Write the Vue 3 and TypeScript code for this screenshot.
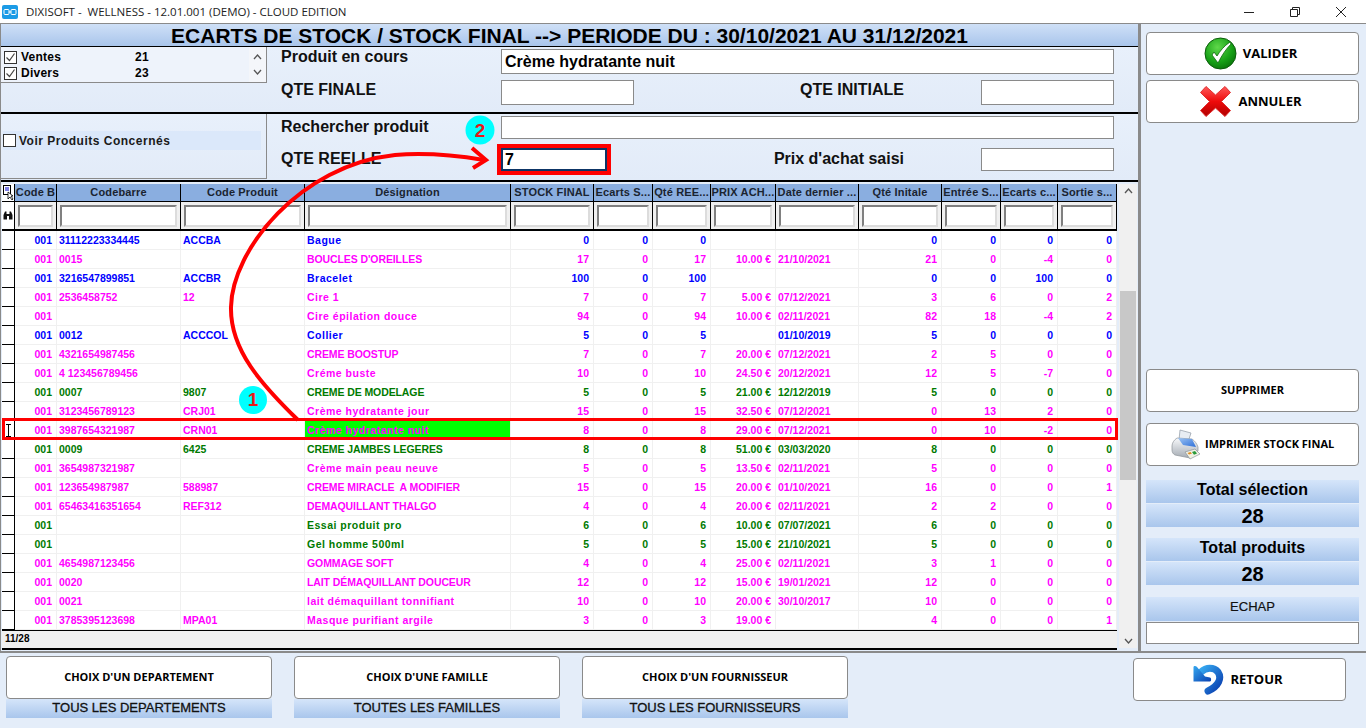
<template>
  <div class="app">
    <header class="titlebar">
      <svg class="app-icon" width="16" height="14" viewBox="0 0 16 14">
        <rect width="16" height="14" rx="2" fill="#1c9be6" />
        <rect x="2" y="4.5" width="5" height="5" rx="1" fill="none" stroke="#fff" />
        <rect x="9" y="4.5" width="5" height="5" rx="1" fill="none" stroke="#fff" />
        <path d="M7 7h2" stroke="#fff" />
      </svg>
      <span class="app-title">{{ appTitle }}</span>
      <div class="win-controls">
        <svg width="12" height="12" viewBox="0 0 12 12"><path d="M1 6.5h10" stroke="#222" /></svg>
        <svg width="12" height="12" viewBox="0 0 12 12" fill="none" stroke="#222"><path d="M1.5 3.5h7v7h-7zM3.5 3.5v-2h7v7h-2" /></svg>
        <svg width="12" height="12" viewBox="0 0 12 12"><path d="M1 1l10 10M11 1L1 11" stroke="#222" /></svg>
      </div>
    </header>

    <div class="main">
      <section class="left">
        <h1 class="page-title">ECARTS DE STOCK / STOCK FINAL --&gt; PERIODE DU : 30/10/2021 AU 31/12/2021</h1>

        <div class="form-section first">
          <div class="side">
            <div class="listbox">
              <div class="list-rows">
                <label v-for="item in origins" :key="item.name" class="list-row">
                  <span class="check on">
                    <svg width="11" height="11" viewBox="0 0 11 11"><path d="M1.5 5.5l3 3 5-7" fill="none" stroke="#444" stroke-width="1.2" /></svg>
                  </span>
                  <span class="list-name">{{ item.name }}</span>
                  <span class="list-count">{{ item.count }}</span>
                </label>
              </div>
              <div class="list-scroll">
                <svg width="9" height="6" viewBox="0 0 9 6"><path d="M1 5l3.5-4L8 5" fill="none" stroke="#555" stroke-width="1.3" /></svg>
                <svg width="9" height="6" viewBox="0 0 9 6"><path d="M1 1l3.5 4L8 1" fill="none" stroke="#555" stroke-width="1.3" /></svg>
              </div>
            </div>
          </div>
          <div class="fields">
            <span class="field-label top-label">Produit en cours</span>
            <input class="field wide product" value="Crème hydratante nuit" readonly />
            <span class="field-label">QTE FINALE</span>
            <input class="field" readonly />
            <span class="field-label right-label">QTE INITIALE</span>
            <input class="field" readonly />
          </div>
        </div>

        <div class="form-section second">
          <div class="side boxed">
            <label class="concerned">
              <span class="check"></span>
              <span>Voir Produits Concernés</span>
            </label>
          </div>
          <div class="fields">
            <span class="field-label">Rechercher produit</span>
            <input class="field wide" readonly />
            <span class="field-label">QTE REELLE</span>
            <input class="field qty" value="7" readonly />
            <span class="field-label right-label">Prix d'achat saisi</span>
            <input class="field" readonly />
          </div>
        </div>

        <div class="grid-wrap">
          <div class="grid">
            <div class="grid-row head">
              <div class="corner">
                <svg width="11" height="15" viewBox="0 0 11 15">
                  <rect x="0.5" y="0.5" width="7" height="9" fill="#fff" stroke="#000" />
                  <path d="M2 3h4M2 5h4" stroke="#00c" />
                  <path d="M5 7l0 7 2-2 2 3 1-1-2-3h2z" fill="#fff" stroke="#000" stroke-width="0.8" />
                </svg>
              </div>
              <div v-for="col in columns" :key="col" class="head-cell">{{ col }}</div>
            </div>
            <div class="grid-row filters">
              <div class="corner">
                <svg width="10" height="9" viewBox="0 0 10 9">
                  <path d="M0.5 4L2 0.5h1.5V3h3V0.5H8L9.5 4v4.5h-3.5V5H4v3.5H0.5z" fill="#111" />
                </svg>
              </div>
              <div v-for="col in columns" :key="col" class="filter-cell"><input class="filter" readonly /></div>
            </div>
            <div
              v-for="(row, i) in rows"
              :key="i"
              class="grid-row data"
              :class="row.kind"
            >
              <div class="marker">
                <svg v-if="i === selected" width="7" height="13" viewBox="0 0 7 13"><path d="M1 .5h5M1 12.5h5M3.5 .5v12" stroke="#000" /></svg>
              </div>
              <div class="cell num">001</div>
              <div class="cell">{{ row.bar }}</div>
              <div class="cell">{{ row.code }}</div>
              <div class="cell name" :class="{ picked: i === selected, lower: hasLowercase(row.name) }">{{ row.name }}</div>
              <div class="cell num">{{ row.v[0] }}</div>
              <div class="cell num">0</div>
              <div class="cell num">{{ row.v[0] }}</div>
              <div class="cell num">{{ row.price }}</div>
              <div class="cell">{{ row.date }}</div>
              <div class="cell num">{{ row.v[1] }}</div>
              <div class="cell num">{{ row.v[2] }}</div>
              <div class="cell num">{{ row.v[3] }}</div>
              <div class="cell num">{{ row.v[4] }}</div>
            </div>
            <div class="grid-foot">11/28</div>
          </div>
          <div class="scrollbar">
            <svg width="9" height="6" viewBox="0 0 9 6"><path d="M1 5l3.5-4L8 5" fill="none" stroke="#555" stroke-width="1.3" /></svg>
            <div class="track"><div class="thumb"></div></div>
            <svg width="9" height="6" viewBox="0 0 9 6"><path d="M1 1l3.5 4L8 1" fill="none" stroke="#555" stroke-width="1.3" /></svg>
          </div>
        </div>
      </section>

      <aside class="right">
        <button class="btn big">
          <svg width="33" height="33" viewBox="0 0 33 33">
            <defs>
              <radialGradient id="okFill" cx="0.4" cy="0.3" r="0.8">
                <stop offset="0" stop-color="#5fd84a" />
                <stop offset="0.6" stop-color="#16a016" />
                <stop offset="1" stop-color="#066a06" />
              </radialGradient>
            </defs>
            <circle cx="16.5" cy="16.5" r="15.5" fill="url(#okFill)" stroke="#0a5c0a" />
            <path d="M8 18l6 8c4-8 8-14 13-19l-1-2c-6 4-10 9-13 14l-3-4z" fill="#fff" stroke="#0c6a0c" stroke-width="0.8" />
          </svg>
          <span class="btn-big-text">VALIDER</span>
        </button>
        <button class="btn big">
          <svg width="33" height="33" viewBox="0 0 33 33">
            <defs>
              <linearGradient id="koFill" x1="0" y1="0" x2="0" y2="1">
                <stop offset="0" stop-color="#ff5a5a" />
                <stop offset="0.5" stop-color="#ee0a0a" />
                <stop offset="1" stop-color="#b00000" />
              </linearGradient>
            </defs>
            <path d="M7 1.5l9.5 8.5 9.5-8.5 5.5 6-9 9 9 9-5.5 6-9.5-8.5-9.5 8.5-5.5-6 9-9-9-9z" fill="url(#koFill)" stroke="#e03030" stroke-linejoin="round" />
          </svg>
          <span class="btn-big-text">ANNULER</span>
        </button>
        <button class="btn delete"><span class="lift">SUPPRIMER</span></button>
        <button class="btn print">
          <svg width="30" height="32" viewBox="0 0 30 32">
            <defs>
              <linearGradient id="printBody" x1="0" y1="0" x2="0" y2="1">
                <stop offset="0" stop-color="#f8f9fb" />
                <stop offset="1" stop-color="#a4abb3" />
              </linearGradient>
              <linearGradient id="printGlass" x1="0" y1="0" x2="1" y2="1">
                <stop offset="0" stop-color="#9cc4f4" />
                <stop offset="1" stop-color="#2f6fd8" />
              </linearGradient>
            </defs>
            <path d="M9 1l11 3-3 9-9-2z" fill="#e8edf3" stroke="#8e98a4" stroke-width="0.7" />
            <path d="M1 17c0-3 2-6 5-8l15 1c3 2 5 5 6 8v4l-8 7-15-3c-2-1-3-3-3-5z" fill="url(#printBody)" stroke="#8e949a" stroke-width="0.7" />
            <path d="M7 9l14 1 4 8-13-2z" fill="url(#printGlass)" />
            <path d="M14 23l10-3 5 5-10 5z" fill="#f0f2e4" stroke="#7d8790" stroke-width="0.6" />
            <path d="M21 23l3-1 2 2.500-3 1.200z" fill="#2a9a3a" />
            <path d="M16.500 24l3-1 1.500 1.500-3 1z" fill="#e08a20" />
          </svg>
          <span class="lift">IMPRIMER STOCK FINAL</span>
        </button>
        <div class="band total first-total">Total sélection</div>
        <div class="band total value">28</div>
        <div class="band total second-total">Total produits</div>
        <div class="band total value">28</div>
        <div class="band echap">ECHAP</div>
        <input class="echap-input" readonly />
      </aside>
    </div>

    <footer class="bottom">
      <div v-for="group in choices" :key="group.action" class="choice">
        <button class="btn choice-btn"><span class="lift">{{ group.action }}</span></button>
        <div class="band choice-label">{{ group.current }}</div>
      </div>
      <button class="btn big back">
        <svg width="32" height="31" viewBox="0 0 32 31">
          <defs>
            <linearGradient id="backFill" x1="0" y1="0" x2="1" y2="1">
              <stop offset="0" stop-color="#35a8f0" />
              <stop offset="1" stop-color="#0a3fb0" />
            </linearGradient>
          </defs>
          <path d="M16 27C27 22 30 14 26 8 22 3 14 3 9 8" fill="none" stroke="url(#backFill)" stroke-width="7" stroke-linecap="round" />
          <path d="M1.500 3L1.500 17.500 18 17.500C19.500 17.500 19.500 13.500 18 13.500L13 12.500 5 3C4 1.500 1.500 1.500 1.500 3z" fill="url(#backFill)" />
        </svg>
        <span class="btn-big-text">RETOUR</span>
      </button>
    </footer>

    <!-- annotations posées sur la capture -->
    <svg class="annotations" width="1366" height="728" viewBox="0 0 1366 728">
      <rect x="3.500" y="419.500" width="1113" height="19" fill="none" stroke="#f00" stroke-width="3" />
      <path d="M298 420C262 385 230 350 231 307 232 250 300 165 395 155 430 152 460 156 484 160" fill="none" stroke="#f00" stroke-width="4" />
      <path d="M472 148L486 160 473 168" fill="none" stroke="#f00" stroke-width="4" />
      <circle cx="253" cy="400" r="14" fill="#0ff" />
      <text x="253" y="406" class="badge">1</text>
      <circle cx="480" cy="130" r="14.500" fill="#0ff" />
      <text x="480" y="137" class="badge">2</text>
    </svg>
  </div>
</template>

<script setup lang="ts">
type Kind = 'blue' | 'pink' | 'green'

interface StockRow {
  kind: Kind
  bar: string
  code: string
  name: string
  price: string
  date: string
  // stock final, qté initiale, entrée, écarts, sortie
  v: [number, number, number, number, number]
}

const appTitle = 'DIXISOFT -  WELLNESS - 12.01.001 (DEMO) - CLOUD EDITION'

const selected = 10

const origins = [
  { name: 'Ventes', count: 21 },
  { name: 'Divers', count: 23 },
]

const columns = [
  'Code B', 'Codebarre', 'Code Produit', 'Désignation', 'STOCK FINAL', 'Ecarts S...', 'Qté REE...',
  'PRIX ACH...', 'Date dernier ...', 'Qté Initale', 'Entrée S...', 'Ecarts c...', 'Sortie s...',
]

const rows: StockRow[] = [
  { kind: 'blue', bar: '31112223334445', code: 'ACCBA', name: 'Bague', price: '', date: '', v: [0, 0, 0, 0, 0] },
  { kind: 'pink', bar: '0015', code: '', name: "BOUCLES D'OREILLES", price: '10.00 €', date: '21/10/2021', v: [17, 21, 0, -4, 0] },
  { kind: 'blue', bar: '3216547899851', code: 'ACCBR', name: 'Bracelet', price: '', date: '', v: [100, 0, 0, 100, 0] },
  { kind: 'pink', bar: '2536458752', code: '12', name: 'Cire 1', price: '5.00 €', date: '07/12/2021', v: [7, 3, 6, 0, 2] },
  { kind: 'pink', bar: '', code: '', name: 'Cire épilation douce', price: '10.00 €', date: '02/11/2021', v: [94, 82, 18, -4, 2] },
  { kind: 'blue', bar: '0012', code: 'ACCCOL', name: 'Collier', price: '', date: '01/10/2019', v: [5, 5, 0, 0, 0] },
  { kind: 'pink', bar: '4321654987456', code: '', name: 'CREME BOOSTUP', price: '20.00 €', date: '07/12/2021', v: [7, 2, 5, 0, 0] },
  { kind: 'pink', bar: '4 123456789456', code: '', name: 'Créme buste', price: '24.50 €', date: '20/12/2021', v: [10, 12, 5, -7, 0] },
  { kind: 'green', bar: '0007', code: '9807', name: 'CREME DE MODELAGE', price: '21.00 €', date: '12/12/2019', v: [5, 5, 0, 0, 0] },
  { kind: 'pink', bar: '3123456789123', code: 'CRJ01', name: 'Crème hydratante jour', price: '32.50 €', date: '07/12/2021', v: [15, 0, 13, 2, 0] },
  { kind: 'pink', bar: '3987654321987', code: 'CRN01', name: 'Crème hydratante nuit', price: '29.00 €', date: '07/12/2021', v: [8, 0, 10, -2, 0] },
  { kind: 'green', bar: '0009', code: '6425', name: 'CREME JAMBES LEGERES', price: '51.00 €', date: '03/03/2020', v: [8, 8, 0, 0, 0] },
  { kind: 'pink', bar: '3654987321987', code: '', name: 'Crème main peau neuve', price: '13.50 €', date: '02/11/2021', v: [5, 5, 0, 0, 0] },
  { kind: 'pink', bar: '123654987987', code: '588987', name: 'CREME MIRACLE  A MODIFIER', price: '20.00 €', date: '01/10/2021', v: [15, 16, 0, 0, 1] },
  { kind: 'pink', bar: '65463416351654', code: 'REF312', name: 'DEMAQUILLANT THALGO', price: '20.00 €', date: '02/11/2021', v: [4, 2, 2, 0, 0] },
  { kind: 'green', bar: '', code: '', name: 'Essai produit pro', price: '10.00 €', date: '07/07/2021', v: [6, 6, 0, 0, 0] },
  { kind: 'green', bar: '', code: '', name: 'Gel homme 500ml', price: '15.00 €', date: '21/10/2021', v: [5, 5, 0, 0, 0] },
  { kind: 'pink', bar: '4654987123456', code: '', name: 'GOMMAGE SOFT', price: '25.00 €', date: '02/11/2021', v: [4, 3, 1, 0, 0] },
  { kind: 'pink', bar: '0020', code: '', name: 'LAIT DÉMAQUILLANT DOUCEUR', price: '15.00 €', date: '19/01/2021', v: [12, 12, 0, 0, 0] },
  { kind: 'pink', bar: '0021', code: '', name: 'lait démaquillant tonnifiant', price: '20.00 €', date: '30/10/2017', v: [10, 10, 0, 0, 0] },
  { kind: 'pink', bar: '3785395123698', code: 'MPA01', name: 'Masque purifiant argile', price: '19.00 €', date: '', v: [3, 4, 0, 0, 1] },
]

const choices = [
  { action: "CHOIX D'UN DEPARTEMENT", current: 'TOUS LES DEPARTEMENTS' },
  { action: "CHOIX D'UNE FAMILLE", current: 'TOUTES LES FAMILLES' },
  { action: "CHOIX D'UN FOURNISSEUR", current: 'TOUS LES FOURNISSEURS' },
]

const hasLowercase = (name: string): boolean => /[a-z]/.test(name)
</script>

<style>
html,
body {
  margin: 0;
  overflow: hidden;
}
</style>

<style scoped>
.app {
  position: relative;
  width: 1366px;
  height: 728px;
  overflow: hidden;
  background: #e4edf9;
  font-family: "Liberation Sans", Arial, sans-serif;
  color: #000;
}

.titlebar {
  height: 23px;
  display: flex;
  align-items: center;
  background: #fff;
  padding-left: 2px;
}

.app-icon {
  margin-right: 8px;
}

.app-title {
  font-family: "Open Sans", sans-serif;
  font-size: 11.5px;
  color: #222;
  white-space: pre;
}

.win-controls {
  margin-left: auto;
  display: flex;
  gap: 34px;
  padding-right: 19px;
}

.main {
  display: flex;
  height: 627px;
  border-top: 1px solid #8a8a8a;
  border-left: 1px solid #8a8a8a;
}

.left {
  width: 1138px;
  border-right: 3px solid #8a8a8a;
}

.page-title {
  margin: 0;
  height: 22px;
  line-height: 23px;
  text-align: center;
  font-size: 21px;
  font-weight: 700;
  background: linear-gradient(#cfe0f7, #a9c5eb);
  border-bottom: 1px solid #000;
  white-space: nowrap;
}

.form-section {
  display: flex;
  border-bottom: 2px solid #000;
  background: linear-gradient(#e8f0fb, #e2ebf8);
}

.form-section.first {
  height: 65px;
}

.form-section.second {
  height: 66px;
}

.side {
  width: 266px;
  flex: none;
}

.side.boxed {
  height: 65px;
  border-right: 1px solid #8a8a8a;
  border-bottom: 1px solid #8a8a8a;
  box-sizing: border-box;
  padding-top: 17px;
}

.listbox {
  height: 35px;
  display: flex;
  background: #eef3fb;
  border-right: 1px solid #8a8a8a;
  border-bottom: 1px solid #8a8a8a;
}

.list-rows {
  flex: 1;
  padding-top: 2px;
}

.list-row {
  display: flex;
  align-items: center;
  height: 16px;
  padding-left: 3px;
  font-size: 12px;
  font-weight: 700;
  letter-spacing: 0.25px;
}

.check {
  width: 11px;
  height: 11px;
  display: inline-flex;
  border: 1px solid #333;
  background: #fff;
  flex: none;
}

.list-name {
  width: 114px;
  margin-left: 4px;
}

.list-scroll {
  width: 17px;
  display: flex;
  flex-direction: column;
  align-items: center;
  justify-content: space-around;
  padding: 3px 0;
  background: #f4f6fa;
}

.concerned {
  display: flex;
  align-items: center;
  gap: 3px;
  height: 19px;
  margin: 0 5px 0 2px;
  background: #dbe8fa;
  font-size: 12px;
  font-weight: 700;
  letter-spacing: 0.5px;
  color: #1a1a1a;
}

.fields {
  flex: 1;
  display: grid;
  grid-template-columns: 220px 133px 347px 133px;
  grid-auto-rows: 25px;
  row-gap: 6px;
  padding: 2px 0 0 14px;
  align-items: center;
}

.second .fields {
  grid-auto-rows: 23px;
  row-gap: 9px;
  padding-top: 2px;
}

.field-label {
  font-size: 16px;
  font-weight: 700;
  color: #111;
  white-space: nowrap;
  margin-bottom: 5px;
}

.field-label.top-label {
  margin-bottom: 9px;
}

.second .field-label {
  margin-bottom: 1px;
}

.right-label {
  text-align: right;
  padding-right: 77px;
}

.field {
  box-sizing: border-box;
  height: 25px;
  width: 133px;
  border: 1px solid #8a8a8a;
  border-radius: 0;
  background: #fff;
  padding: 0 3px;
  font-family: "Liberation Sans", Arial, sans-serif;
  font-size: 16px;
  font-weight: 700;
  outline: none;
}

.second .field {
  height: 23px;
}

.field.wide {
  grid-column: 2 / -1;
  width: 613px;
}

.field.qty {
  width: 106px;
  border: 2px solid #0d3566;
  outline: 4px solid #f00;
  padding: 0 2px;
}

.grid-wrap {
  display: flex;
  margin-top: 2px;
  padding-left: 1px;
}

.grid {
  width: 1115px;
}

.grid-row {
  display: grid;
  grid-template-columns: 13px 42px 124px 124px 206px 83px 59px 58px 65px 83px 83px 59px 57px 59px;
}

.head {
  height: 17px;
  border-bottom: 1px solid #000;
}

.corner {
  background: #fff;
  border-right: 1px solid #000;
  display: flex;
  align-items: center;
  justify-content: center;
  overflow: hidden;
}

.head-cell {
  background: #8aaee0;
  border-right: 1px solid #000;
  font-size: 11px;
  font-weight: 700;
  letter-spacing: 0.15px;
  line-height: 17px;
  text-align: center;
  color: #1a2430;
  white-space: nowrap;
  overflow: hidden;
}

.filters {
  height: 27px;
  border-bottom: 2px solid #000;
  background: #f0f0f0;
}

.filter-cell {
  display: flex;
  align-items: center;
  justify-content: center;
  border-right: 1px solid #000;
  min-width: 0;
}

.filter {
  box-sizing: border-box;
  width: calc(100% - 6px);
  height: 22px;
  padding: 0;
  border: 2px solid;
  border-color: #808080 #dcdcdc #dcdcdc #808080;
  background: #fff;
  outline: none;
}

.data {
  height: 19px;
  background: #fff;
  font-size: 10.5px;
  font-weight: 700;
  line-height: 18px;
}

.data.blue {
  color: #0000ff;
}

.data.pink {
  color: #ff00ff;
}

.data.green {
  color: #007a00;
}

.marker {
  border-right: 1px solid #000;
  border-bottom: 1px solid #000;
  display: flex;
  align-items: center;
  justify-content: center;
}

.cell {
  box-sizing: border-box;
  padding: 0 2px;
  border-right: 1px solid #f0f0f0;
  border-bottom: 1px solid #f0f0f0;
  white-space: pre;
  overflow: hidden;
}

.cell.num {
  text-align: right;
  padding-right: 4px;
}

.cell.name {
  letter-spacing: -0.1px;
}

.cell.name.lower {
  letter-spacing: 0.5px;
}

.cell.picked {
  background: #00ff00;
  border-bottom: 0;
  margin-bottom: 1px;
}

.grid-foot {
  height: 17px;
  line-height: 15px;
  background: #f0f0f0;
  border-top: 1px solid #000;
  border-bottom: 2px solid #000;
  font-size: 10px;
  font-weight: 700;
  padding-left: 3px;
}

.scrollbar {
  width: 18px;
  margin-left: 2px;
  background: #f0f0f0;
  display: flex;
  flex-direction: column;
  align-items: center;
  padding: 4px 0;
  box-sizing: border-box;
  height: 464px;
}

.track {
  flex: 1;
  width: 100%;
  padding-top: 94px;
  margin: 3px 0;
  box-sizing: border-box;
}

.thumb {
  height: 189px;
  margin: 0 1px;
  background: #c8c8c8;
}

.right {
  flex: 1;
  display: flex;
  flex-direction: column;
  padding: 8px 7px 0 5px;
}

.btn {
  box-sizing: border-box;
  width: 213px;
  height: 43px;
  flex: none;
  display: flex;
  align-items: center;
  justify-content: center;
  background: #fff;
  border: 1px solid #8a8a8a;
  border-radius: 4px;
  padding: 0;
  font-family: "Open Sans", sans-serif;
  font-size: 11px;
  font-weight: 700;
  color: #000;
}

.lift {
  margin-bottom: 2px;
}

.big {
  padding-right: 4px;
}

.big + .big {
  margin-top: 5px;
}

.btn-big-text {
  font-size: 13px;
  margin-left: 6px;
  margin-bottom: 1px;
}

.delete {
  margin-top: 246px;
}

.print {
  margin-top: 11px;
  gap: 4px;
  justify-content: flex-start;
  padding-left: 24px;
}

.band {
  background: linear-gradient(#d5e5fa, #a9c6ec);
  text-align: center;
}

.total {
  height: 23px;
  line-height: 19px;
  font-size: 16px;
  font-weight: 700;
  margin-top: 1px;
}

.first-total {
  margin-top: 14px;
}

.second-total {
  margin-top: 11px;
}

.value {
  font-size: 20px;
  line-height: 25px;
}

.echap {
  height: 24px;
  margin-top: 12px;
  line-height: 19px;
  font-size: 13px;
  color: #111;
  -webkit-text-stroke: 0.2px #111;
}

.echap-input {
  box-sizing: border-box;
  width: 213px;
  height: 22px;
  margin-top: 1px;
  border: 1px solid #8a8a8a;
  background: #fff;
  outline: none;
}

.bottom {
  display: flex;
  gap: 22px;
  height: 74px;
  padding: 3px 0 0 6px;
  border-top: 2px solid #8a8a8a;
  border-bottom: 1px solid #8a8a8a;
}

.choice {
  width: 266px;
}

.choice-btn {
  width: 266px;
}

.choice-label {
  height: 19px;
  line-height: 18px;
  font-size: 13px;
  color: #111;
  -webkit-text-stroke: 0.3px #111;
}

.back {
  margin: 2px 20px 0 auto;
}

.annotations {
  position: absolute;
  left: 0;
  top: 0;
  pointer-events: none;
}

.badge {
  font-family: "Liberation Sans", Arial, sans-serif;
  font-size: 19px;
  font-weight: 700;
  text-anchor: middle;
  fill: #e81818;
}
</style>
